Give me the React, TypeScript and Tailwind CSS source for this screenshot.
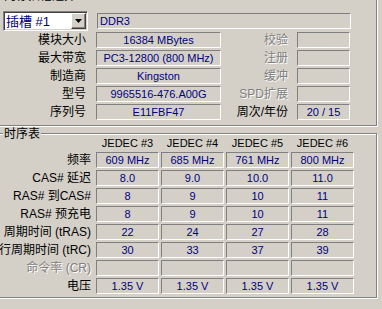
import React from 'react'

const font = { fontFamily: '"Liberation Sans", "Noto Sans CJK SC", sans-serif' }

function Field({ value = '', left = false, w }: { value?: string; left?: boolean; w: string }) {
  return (
    <div
      className={`${w} h-[16px] shrink-0 flex items-center border border-t-[#808080] border-l-[#808080] border-r-white border-b-white text-[11px] leading-none text-[#000080] whitespace-nowrap overflow-hidden ${
        left ? 'justify-start pl-[2px]' : 'justify-center'
      }`}
    >
      {value}
    </div>
  )
}

function Label({ text, w, off = false }: { text: string; w: string; off?: boolean }) {
  return (
    <div
      className={`${w} shrink-0 text-right text-[12px] leading-[16px] whitespace-nowrap ${
        off ? 'text-[#808080] [text-shadow:1px_1px_0_#fff]' : 'text-black'
      }`}
    >
      {text}
    </div>
  )
}

const moduleRows = [
  { label: '模块大小', value: '16384 MBytes', right: '校验', rightOff: true, rightValue: '' },
  { label: '最大带宽', value: 'PC3-12800 (800 MHz)', right: '注册', rightOff: true, rightValue: '' },
  { label: '制造商', value: 'Kingston', right: '缓冲', rightOff: true, rightValue: '' },
  { label: '型号', value: '9965516-476.A00G', right: 'SPD扩展', rightOff: true, rightValue: '' },
  { label: '序列号', value: 'E11FBF47', right: '周次/年份', rightOff: false, rightValue: '20 / 15' },
]

const jedec = ['JEDEC #3', 'JEDEC #4', 'JEDEC #5', 'JEDEC #6']

const timings: { label: string; off?: boolean; values: string[] }[] = [
  { label: '频率', values: ['609 MHz', '685 MHz', '761 MHz', '800 MHz'] },
  { label: 'CAS# 延迟', values: ['8.0', '9.0', '10.0', '11.0'] },
  { label: 'RAS# 到CAS#', values: ['8', '9', '10', '11'] },
  { label: 'RAS# 预充电', values: ['8', '9', '10', '11'] },
  { label: '周期时间 (tRAS)', values: ['22', '24', '27', '28'] },
  { label: '行周期时间 (tRC)', values: ['30', '33', '37', '39'] },
  { label: '命令率 (CR)', off: true, values: ['', '', '', ''] },
  { label: '电压', values: ['1.35 V', '1.35 V', '1.35 V', '1.35 V'] },
]

export default function App() {
  return (
    <div className="w-[382px] h-[309px] bg-[#d4d0c8] overflow-hidden" style={font}>
      {/* 内存插槽选择 */}
      <div className="relative ml-[-6px] mt-[-4px] w-[383px] h-[130px] border border-[#808080] shadow-[inset_1px_1px_0_#fff,1px_1px_0_#fff]">
        <span className="absolute left-[8px] top-[-8px] px-[1px] bg-[#d4d0c8] text-[12px] leading-[14px] text-black">
          内存插槽选择
        </span>

        <div className="pt-[14px]">
          <div className="flex items-center">
            <div className="ml-[8px] w-[85px] h-[20px] shrink-0 flex items-center bg-white border border-[#808080] border-r-white border-b-white shadow-[inset_1px_1px_0_#404040,inset_-1px_-1px_0_#d4d0c8]">
              <span className="flex-1 pl-[2px] text-[13px] leading-none text-[#000080] whitespace-nowrap">插槽 #1</span>
              <div className="mr-[1px] w-[15px] h-[16px] flex items-center justify-center bg-[#d4d0c8] border border-white border-r-[#404040] border-b-[#404040] shadow-[inset_-1px_-1px_0_#808080]">
                <svg width="7" height="4" viewBox="0 0 7 4">
                  <path d="M0 0h7L3.5 4z" fill="#000" />
                </svg>
              </div>
            </div>
            <div className="ml-[9px]">
              <Field w="w-[254px]" value="DDR3" left />
            </div>
          </div>

          <div className="mt-[1px] flex flex-col gap-[2px]">
            {moduleRows.map((r) => (
              <div key={r.label} className="flex items-center">
                <Label text={r.label} w="w-[91px]" />
                <div className="ml-[10px]">
                  <Field w="w-[125px]" value={r.value} />
                </div>
                <Label text={r.right} w="w-[67px]" off={r.rightOff} />
                <div className="ml-[9px]">
                  <Field w="w-[53px]" value={r.rightValue} />
                </div>
              </div>
            ))}
          </div>
        </div>
      </div>

      {/* 时序表 */}
      <div className="relative ml-[-6px] mt-[7px] w-[383px] h-[165px] border border-[#808080] shadow-[inset_1px_1px_0_#fff,1px_1px_0_#fff]">
        <span className="absolute left-[8px] top-[-7px] px-[1px] bg-[#d4d0c8] text-[12px] leading-[14px] text-black">
          时序表
        </span>

        <div className="pt-[2px]">
          <div className="flex h-[14px] items-center">
            <div className="w-[101px] shrink-0" />
            <div className="grid grid-cols-[63px_63px_63px_63px] gap-x-[2px]">
              {jedec.map((j) => (
                <div key={j} className="text-center text-[11px] leading-none text-black whitespace-nowrap">
                  {j}
                </div>
              ))}
            </div>
          </div>

          <div className="mt-[2px] flex flex-col gap-[2px]">
            {timings.map((t) => (
              <div key={t.label} className="flex items-center">
                <Label text={t.label} w="w-[96px]" off={t.off} />
                <div className="ml-[5px] grid grid-cols-[63px_63px_63px_63px] gap-x-[2px]">
                  {t.values.map((v, i) => (
                    <Field key={i} w="w-[63px]" value={v} />
                  ))}
                </div>
              </div>
            ))}
          </div>
        </div>
      </div>
    </div>
  )
}
